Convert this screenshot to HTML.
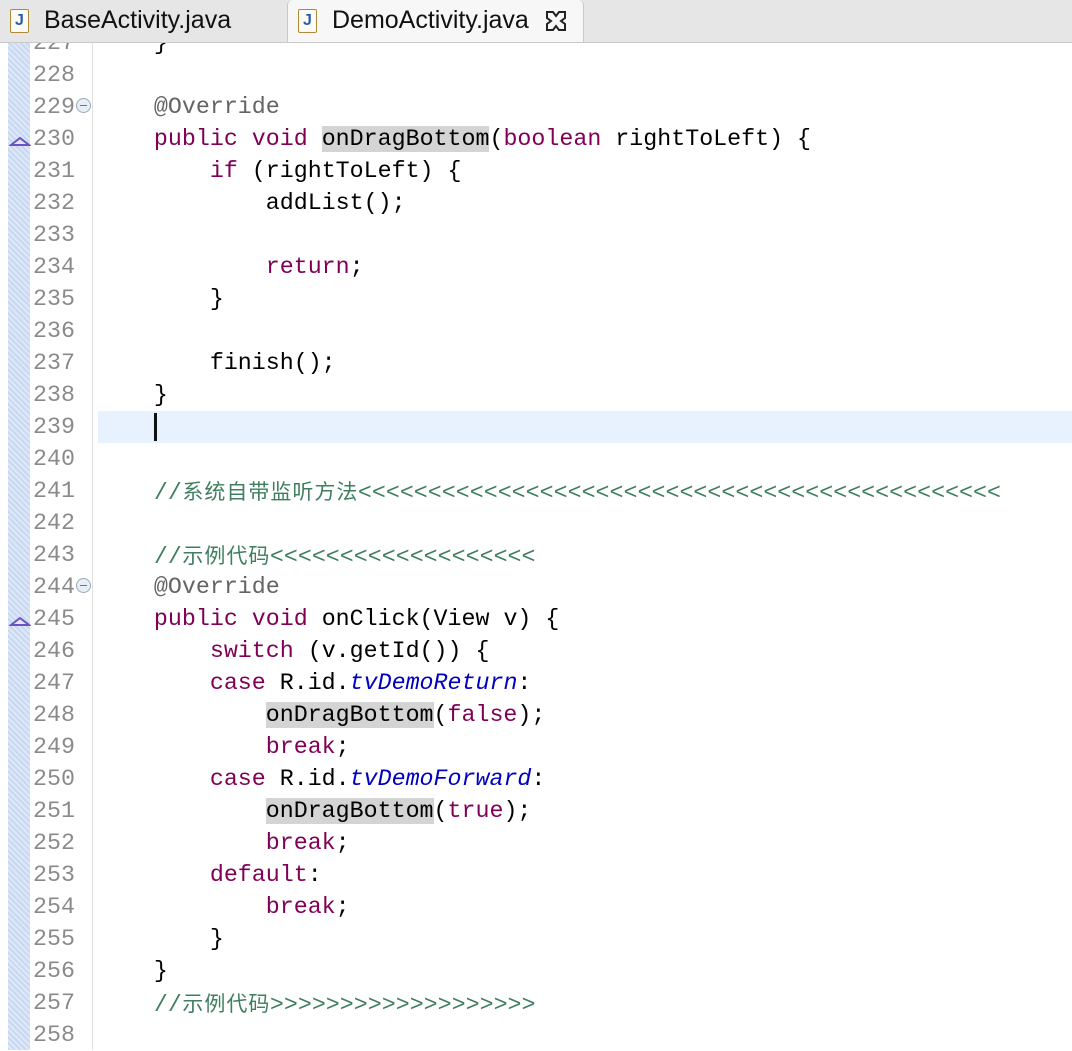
<!DOCTYPE html>
<html><head><meta charset="utf-8"><style>
body{margin:0;width:1072px;height:1050px;background:#fff;overflow:hidden;position:relative;font-family:"Liberation Sans",sans-serif}
.tabs{position:absolute;left:0;top:0;width:1072px;height:42px;background:#e6e6e6;border-bottom:1px solid #c9c9c9;z-index:5}
.tab{position:absolute;top:0;height:42px;font-size:25px;line-height:40px;color:#111}
.tab .ic{position:absolute;left:10px;top:9px;width:17px;height:22px;border:1px solid #b08a3a;background:#fdfbf3;border-radius:2px;font:bold 16px "Liberation Sans";color:#2a5db0;text-align:center;line-height:22px}
.act{background:#f7f7f7;border-left:1px solid #c9c9c9;border-right:1px solid #c9c9c9;border-radius:5px 5px 0 0}
.gut{position:absolute;left:8px;top:43px;width:22px;height:1007px;background:repeating-linear-gradient(45deg,#c8d8f0 0 2px,#dde8f8 2px 4px)}
.gline{position:absolute;left:92px;top:43px;width:1px;height:1007px;background:#e0e0e0}
.cur{position:absolute;left:98px;top:411px;width:974px;height:32px;background:#e8f2fe}
.ln,.cd{position:absolute;height:32px;line-height:32px;font-family:"Liberation Mono",monospace;font-size:23.3px;white-space:pre}
.ln{left:33px;color:#8a8a8a}
.cd{left:98px;color:#000}
.k{color:#7f0055}.c{color:#3f7f5f}.a{color:#646464}.f{color:#0000c0;font-style:italic}
.h{background:#d4d4d4}
.z{display:inline-block;width:22px;font-family:"Noto Sans CJK SC",sans-serif;font-size:21px;text-align:center}
.fold{position:absolute;left:76px;width:13px;height:13px;border:1px solid #9ab;border-radius:50%;background:#e8eef5}
.fold:after{content:"";position:absolute;left:3px;top:6px;width:7px;height:1px;background:#678}
.tri{position:absolute;left:9px}
</style></head><body>
<div class="tabs">
<div class="tab" style="left:0;width:285px"><span class="ic">J</span><span style="position:absolute;left:44px">BaseActivity.java</span></div>
<div class="tab act" style="left:287px;width:295px"><span class="ic">J</span><span style="position:absolute;left:44px">DemoActivity.java</span>
<svg style="position:absolute;left:257px;top:10px" width="22" height="22" viewBox="0 0 22 22"><path d="M2 2 H8 L11 6 L14 2 H20 V8 L16 11 L20 14 V20 H14 L11 16 L8 20 H2 V14 L6 11 L2 8 Z" fill="none" stroke="#222" stroke-width="2"/></svg></div>
</div>
<div class="gut"></div><div class="gline"></div><div class="cur"></div>
<div style="position:absolute;left:154px;top:413px;width:3px;height:28px;background:#111"></div>
<div class="fold" style="top:98px"></div><div class="fold" style="top:578px"></div>
<svg class="tri" style="top:136px" width="22" height="10"><path d="M2 9 L11 2 L20 9 Z" fill="#e8e4f8" stroke="#6a55c0" stroke-width="2"/></svg>
<svg class="tri" style="top:616px" width="22" height="10"><path d="M2 9 L11 2 L20 9 Z" fill="#e8e4f8" stroke="#6a55c0" stroke-width="2"/></svg>
<div class="ln" style="top:27px">227</div>
<div class="ln" style="top:59px">228</div><div class="ln" style="top:91px">229</div><div class="ln" style="top:123px">230</div><div class="ln" style="top:155px">231</div><div class="ln" style="top:187px">232</div><div class="ln" style="top:219px">233</div><div class="ln" style="top:251px">234</div><div class="ln" style="top:283px">235</div><div class="ln" style="top:315px">236</div><div class="ln" style="top:347px">237</div><div class="ln" style="top:379px">238</div><div class="ln" style="top:411px">239</div><div class="ln" style="top:443px">240</div><div class="ln" style="top:475px">241</div><div class="ln" style="top:507px">242</div><div class="ln" style="top:539px">243</div><div class="ln" style="top:571px">244</div><div class="ln" style="top:603px">245</div><div class="ln" style="top:635px">246</div><div class="ln" style="top:667px">247</div><div class="ln" style="top:699px">248</div><div class="ln" style="top:731px">249</div><div class="ln" style="top:763px">250</div><div class="ln" style="top:795px">251</div><div class="ln" style="top:827px">252</div><div class="ln" style="top:859px">253</div><div class="ln" style="top:891px">254</div><div class="ln" style="top:923px">255</div><div class="ln" style="top:955px">256</div><div class="ln" style="top:987px">257</div><div class="ln" style="top:1019px">258</div>
<div class="cd" style="top:27px">    }</div>
<div class="cd a" style="top:91px">    @Override</div>
<div class="cd" style="top:123px">    <span class="k">public void</span> <span class="h">onDragBottom</span>(<span class="k">boolean</span> rightToLeft) {</div>
<div class="cd" style="top:155px">        <span class="k">if</span> (rightToLeft) {</div>
<div class="cd" style="top:187px">            addList();</div>
<div class="cd" style="top:251px">            <span class="k">return</span>;</div>
<div class="cd" style="top:283px">        }</div>
<div class="cd" style="top:347px">        finish();</div>
<div class="cd" style="top:379px">    }</div>
<div class="cd c" style="top:475px">    //<span class="z">系</span><span class="z">统</span><span class="z">自</span><span class="z">带</span><span class="z">监</span><span class="z">听</span><span class="z">方</span><span class="z">法</span>&lt;&lt;&lt;&lt;&lt;&lt;&lt;&lt;&lt;&lt;&lt;&lt;&lt;&lt;&lt;&lt;&lt;&lt;&lt;&lt;&lt;&lt;&lt;&lt;&lt;&lt;&lt;&lt;&lt;&lt;&lt;&lt;&lt;&lt;&lt;&lt;&lt;&lt;&lt;&lt;&lt;&lt;&lt;&lt;&lt;&lt;</div>
<div class="cd c" style="top:539px">    //<span class="z">示</span><span class="z">例</span><span class="z">代</span><span class="z">码</span>&lt;&lt;&lt;&lt;&lt;&lt;&lt;&lt;&lt;&lt;&lt;&lt;&lt;&lt;&lt;&lt;&lt;&lt;&lt;</div>
<div class="cd a" style="top:571px">    @Override</div>
<div class="cd" style="top:603px">    <span class="k">public void</span> onClick(View v) {</div>
<div class="cd" style="top:635px">        <span class="k">switch</span> (v.getId()) {</div>
<div class="cd" style="top:667px">        <span class="k">case</span> R.id.<span class="f">tvDemoReturn</span>:</div>
<div class="cd" style="top:699px">            <span class="h">onDragBottom</span>(<span class="k">false</span>);</div>
<div class="cd" style="top:731px">            <span class="k">break</span>;</div>
<div class="cd" style="top:763px">        <span class="k">case</span> R.id.<span class="f">tvDemoForward</span>:</div>
<div class="cd" style="top:795px">            <span class="h">onDragBottom</span>(<span class="k">true</span>);</div>
<div class="cd" style="top:827px">            <span class="k">break</span>;</div>
<div class="cd" style="top:859px">        <span class="k">default</span>:</div>
<div class="cd" style="top:891px">            <span class="k">break</span>;</div>
<div class="cd" style="top:923px">        }</div>
<div class="cd" style="top:955px">    }</div>
<div class="cd c" style="top:987px">    //<span class="z">示</span><span class="z">例</span><span class="z">代</span><span class="z">码</span>&gt;&gt;&gt;&gt;&gt;&gt;&gt;&gt;&gt;&gt;&gt;&gt;&gt;&gt;&gt;&gt;&gt;&gt;&gt;</div>
</body></html>
